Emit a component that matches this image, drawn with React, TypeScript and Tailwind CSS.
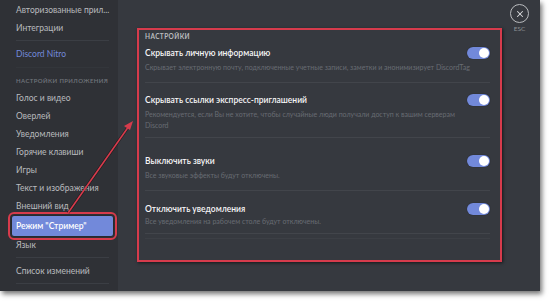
import { X } from 'lucide-react';

const navTop = ['Авторизованные прил...', 'Интеграции'];
const appItems = [
  'Голос и видео',
  'Оверлей',
  'Уведомления',
  'Горячие клавиши',
  'Игры',
  'Текст и изображения',
  'Внешний вид',
];

function Toggle() {
  return (
    <div className="w-[23px] h-[12px] rounded-full bg-[#7289da] flex items-center justify-end pr-[1px] shadow-[0_0_1px_rgba(0,0,0,0.6)]">
      <div className="w-[10px] h-[10px] rounded-full bg-white" />
    </div>
  );
}

function NavItem({ label }: { label: string }) {
  return (
    <div className="h-[18px] leading-[18px] px-[4px] text-[8.5px] text-[#b9bbbe] whitespace-nowrap">
      {label}
    </div>
  );
}

function Sep({ className = '' }: { className?: string }) {
  return <div className={`h-px bg-[#3b3e44] ${className}`} />;
}

export default function App() {
  return (
    <div className="w-[550px] h-[303px] bg-white relative" style={{ fontFamily: 'Lato, "Noto Sans", sans-serif' }}>
      <div className="w-[540px] h-[291px] flex shadow-[2px_3px_5px_rgba(0,0,0,0.55)] overflow-hidden">
        {/* sidebar */}
        <div className="w-[118px] bg-[#2f3136] pt-[1px] pl-[12px] pr-[5px]">
          {navTop.map((l) => (
            <NavItem key={l} label={l} />
          ))}
          <Sep className="mt-[3px] mx-[4px]" />
          <div className="mt-[4px] h-[18px] leading-[18px] px-[4px] text-[8.5px] text-[#7289da]">Discord Nitro</div>
          <Sep className="mt-[4px] mx-[4px] bg-[#33363b]" />
          <div className="mt-[7px] h-[12px] leading-[12px] px-[4px] text-[6px] font-semibold tracking-[0.4px] text-[#72767d] whitespace-nowrap">
            НАСТРОЙКИ ПРИЛОЖЕНИЯ
          </div>
          <div className="mt-[2px]">
            {appItems.map((l) => (
              <NavItem key={l} label={l} />
            ))}
          </div>
          <div className="mt-[1px] h-[20px] leading-[20px] px-[4px] text-[8.5px] font-semibold text-white bg-[#7289da] rounded-[2px] outline-2 outline-offset-[2px] outline-[#d63b4c] shadow-[0_0_2px_rgba(0,0,0,0.5)]">
            Режим "Стример"
          </div>
          <NavItem label="Язык" />
          <Sep className="mt-[3px] mx-[4px]" />
          <div className="mt-[4px]">
            <NavItem label="Список изменений" />
          </div>
          <Sep className="mt-[3px] mx-[4px]" />
        </div>

        {/* content */}
        <div className="flex-1 bg-[#36393f] flex items-start pl-[19px] pt-[4px]">
          <div className="mt-[24px] w-[365px] h-[234px] border-2 border-[#d63b4c] shadow-[1px_1px_3px_rgba(0,0,0,0.6)] pl-[6px] pr-[10px]">
            <div className="h-[14px] leading-[14px] text-[6.5px] font-bold tracking-[0.4px] text-[#b9bbbe]">НАСТРОЙКИ</div>

            <div className="mt-[2px] h-[14px] flex items-center justify-between">
              <span className="text-[8.5px] font-semibold text-[#f6f6f7]">Скрывать личную информацию</span>
              <Toggle />
            </div>
            <div className="h-[10px] leading-[10px] mt-[2px] text-[7px] text-[#686c73] whitespace-nowrap">
              Скрывает электронную почту, подключенные учетные записи, заметки и анонимизирует DiscordTag
            </div>
            <Sep className="mt-[10px] bg-[#42454b]" />

            <div className="mt-[10px] h-[14px] flex items-center justify-between">
              <span className="text-[8.5px] font-semibold text-[#f6f6f7]">Скрывать ссылки экспресс-приглашений</span>
              <Toggle />
            </div>
            <div className="mt-[2px] text-[7px] leading-[11px] text-[#686c73] w-[320px]">
              Рекомендуется, если Вы не хотите, чтобы случайные люди получали доступ к вашим серверам Discord
            </div>
            <Sep className="mt-[6px] bg-[#42454b]" />

            <div className="mt-[16px] h-[14px] flex items-center justify-between">
              <span className="text-[8.5px] font-semibold text-[#f6f6f7]">Выключить звуки</span>
              <Toggle />
            </div>
            <div className="h-[10px] leading-[10px] mt-[2px] text-[7px] text-[#686c73]">
              Все звуковые эффекты будут отключены.
            </div>
            <Sep className="mt-[10px] bg-[#42454b]" />

            <div className="mt-[11px] h-[14px] flex items-center justify-between">
              <span className="text-[8.5px] font-semibold text-[#f6f6f7]">Отключить уведомления</span>
              <Toggle />
            </div>
            <div className="h-[10px] leading-[10px] text-[7px] text-[#686c73]">
              Все уведомления на рабочем столе будут отключены.
            </div>
            <Sep className="mt-[7px] bg-[#42454b]" />
            <Sep className="mt-[4px] bg-[#3c3f45]" />
          </div>

          <div className="ml-[8px] flex flex-col items-center w-[19px]">
            <div className="w-[19px] h-[19px] rounded-full border-[1.5px] border-[#b9bbbe] flex items-center justify-center text-[#dcddde]">
              <X size={10} strokeWidth={2.5} />
            </div>
            <div className="mt-[2px] text-[6.5px] text-[#8e9297] leading-[8px]">ESC</div>
          </div>
        </div>
      </div>

      {/* annotation arrow */}
      <svg className="absolute left-0 top-0 pointer-events-none" width="550" height="303">
        <line x1="68" y1="213" x2="129" y2="126" stroke="rgba(0,0,0,0.45)" strokeWidth="3" />
        <line x1="68" y1="213" x2="129" y2="126" stroke="#d63b4c" strokeWidth="1.6" />
        <polygon points="133,121 124,126 130,130" fill="#d63b4c" />
      </svg>
    </div>
  );
}
